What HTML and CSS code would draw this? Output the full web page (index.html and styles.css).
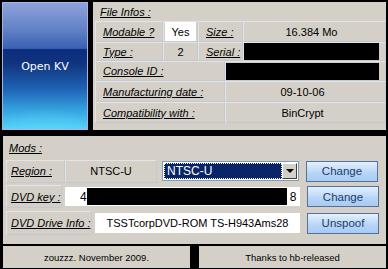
FILE: index.html
```html
<!DOCTYPE html>
<html lang="en">
<head>
    <meta charset="UTF-8">
    <title>Open KV</title>
    <link rel="stylesheet" href="styles.css">
</head>
<body>
<div class="app">
    <div class="top">
        <div class="openkv">Open KV</div>
        <div class="infos">
            <div class="ttl">File Infos :</div>
            <div class="row r1">
                <div class="cell lbl w67">Modable ?</div>
                <div class="cell w34"><span class="yes">Yes</span></div>
                <div class="cell lbl w45">Size :</div>
                <div class="cell val">16.384 Mo</div>
            </div>
            <div class="row r2">
                <div class="cell lbl w67">Type :</div>
                <div class="cell w34">2</div>
                <div class="cell lbl w45">Serial :</div>
                <div class="cell val"><span class="black"></span></div>
            </div>
            <div class="row r3">
                <div class="cell lbl w130">Console ID :</div>
                <div class="cell val"><span class="black"></span></div>
            </div>
            <div class="row r4">
                <div class="cell lbl w130">Manufacturing date :</div>
                <div class="cell val">09-10-06</div>
            </div>
            <div class="row r5">
                <div class="cell lbl w130">Compatibility with :</div>
                <div class="cell val">BinCrypt</div>
            </div>
        </div>
    </div>

    <div class="mods">
        <div class="ttl">Mods :</div>
        <div class="mrow reg">
            <div class="cell lbl m59">Region :</div>
            <div class="cell m92">NTSC-U</div>
            <div class="select">
                <span class="selval">NTSC-U</span>
                <span class="arrow"></span>
            </div>
            <div class="btn">Change</div>
        </div>
        <div class="mrow key">
            <div class="cell lbl m57">DVD key :</div>
            <div class="input keyin">4<span class="redact"></span>8</div>
            <div class="btn">Change</div>
        </div>
        <div class="mrow drv">
            <div class="cell lbl m87">DVD Drive Info :</div>
            <div class="input drvin">TSSTcorpDVD-ROM TS-H943Ams28</div>
            <div class="btn">Unspoof</div>
        </div>
    </div>

    <div class="foot">
        <div class="fbox">zouzzz. November 2009.</div>
        <div class="fbox">Thanks to hb-released</div>
    </div>
</div>
</body>
</html>
```

FILE: styles.css
```css
body{
    margin:0;
    background:#000;
    font-family:"Liberation Sans", Arial, sans-serif;
    font-size:11px;
    color:#000;
}
.app{
    width:388px;
    height:269px;
    padding-top:2px;
    box-sizing:border-box;
}
.top{
    display:flex;
    height:128px;
    margin-left:2px;
}
.openkv{
    width:84px;
    height:126px;
    border:1px solid #9fb6e6;
    background:
        radial-gradient(ellipse 70px 40px at 50% 115%, rgba(110,225,255,0.7), rgba(110,225,255,0) 100%),
        linear-gradient(#8ea2d9 0, #6583c8 20%, #3b61b3 36%, #0c2c7d 37%, #10347f 48%, #1f62b4 68%, #36a6e2 86%, #4fd0f6 100%);
    color:#fff;
    font-family:"DejaVu Sans", sans-serif;
    font-size:11px;
    display:flex;
    align-items:center;
    justify-content:center;
}
.infos{
    width:293px;
    margin-left:5px;
    background:#d4d0c8;
    padding:1px 0 0 2px;
    box-sizing:border-box;
}
.ttl{
    font-style:italic;
    text-decoration:underline;
    height:18px;
    line-height:18px;
    padding-left:5px;
}
.row{
    display:flex;
}
.r1{height:21px;}
.r2{height:19px;}
.r3{height:20px;}
.r4{height:21px;}
.r5{height:21px;}
.cell{
    border:1px solid #c3c9d3;
    border-left-color:#e4e4e8;
    border-top-color:#e4e4e8;
    box-sizing:border-box;
    display:flex;
    align-items:center;
    justify-content:center;
}
.lbl{
    justify-content:flex-start;
    padding-left:7px;
    font-style:italic;
    text-decoration:underline;
}
.w67{width:68px;}
.w34{width:35px;}
.w45{width:45px;}
.w130{width:130px;}
.val{
    flex:1;
    padding-right:6px;
}
.r2 .val, .r3 .val{
    padding:0 6px 0 0;
}
.yes{
    background:#fff;
    width:31px;
    height:19px;
    display:flex;
    align-items:center;
    justify-content:center;
}
.black{
    display:block;
    width:100%;
    height:17px;
    background:#000;
}
.mods{
    margin:6px 0 0 3px;
    width:383px;
    height:108px;
    background:#d4d0c8;
    padding:2px 0 0 3px;
    box-sizing:border-box;
}
.mods .ttl{
    padding-left:3px;
    height:21px;
    line-height:21px;
}
.mrow{
    display:flex;
    align-items:center;
}
.reg{height:24px;}
.key{height:27px;}
.drv{height:26px;}
.m59{width:59px;height:23px;padding-left:4px;}
.m92{width:92px;height:23px;}
.m57{width:56px;height:23px;padding-left:4px;}
.m87{width:86px;height:24px;padding-left:4px;}
.select{
    width:137px;
    height:20px;
    margin-left:5px;
    background:#fff;
    border:1px solid #7f9db9;
    box-sizing:border-box;
    display:flex;
    padding:1px;
}
.selval{
    flex:1;
    background:#0a246a;
    color:#fff;
    outline:1px dotted #fff;
    outline-offset:-1px;
    padding-left:3px;
    line-height:16px;
    font-size:12px;
}
.arrow{
    width:15px;
    background:#d4d0c8;
    border:1px solid;
    border-color:#fff #404040 #404040 #fff;
    box-sizing:border-box;
    position:relative;
}
.arrow::after{
    content:"";
    position:absolute;
    left:3px;
    top:5px;
    border:4px solid transparent;
    border-top:4px solid #000;
    border-bottom:0;
}
.input{
    height:19px;
    background:#fff;
    display:flex;
    align-items:center;
    box-sizing:border-box;
    font-size:12px;
}
.keyin{
    width:235px;
    margin-left:3px;
    padding-left:15px;
}
.redact{
    width:200px;
    height:17px;
    background:#000;
    margin-right:3px;
}
.drvin{
    width:205px;
    margin-left:3px;
    justify-content:center;
    height:20px;
    font-size:11px;
}
.btn{
    width:72px;
    height:21px;
    margin-left:7px;
    box-sizing:border-box;
    border:1px solid #55719e;
    background:linear-gradient(#e4f0fd, #b6d4f6 60%, #a8cbf3);
    color:#233c6c;
    font-size:11.5px;
    display:flex;
    align-items:center;
    justify-content:center;
}
.foot{
    display:flex;
    margin:2px 0 0 3px;
    gap:9px;
}
.fbox{
    width:187px;
    height:22px;
    background:#d4d0c8;
    font-size:9.5px;
    display:flex;
    align-items:center;
    justify-content:center;
}
```
